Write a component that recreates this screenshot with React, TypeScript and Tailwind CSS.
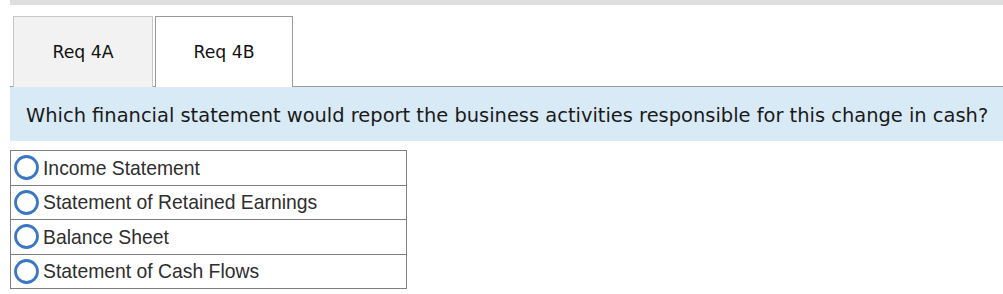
import React from "react";

const options = [
  "Income Statement",
  "Statement of Retained Earnings",
  "Balance Sheet",
  "Statement of Cash Flows",
];

function Radio() {
  return (
    <svg width="25" height="25" viewBox="0 0 25 25" className="shrink-0">
      <circle cx="12.5" cy="12.5" r="11" fill="white" stroke="#3a78c2" strokeWidth="2.8" />
    </svg>
  );
}

export default function App() {
  return (
    <div className="w-[1003px] h-[294px] bg-white overflow-hidden">
      <div className="ml-[10px] h-[5px] bg-[#dedede]" />
      <div className="ml-[10px] mt-[11px] flex items-end border-b border-[#9a9a9a] pl-[3px] h-[71px]">
        <div
          className="w-[140px] h-[71px] -mb-px bg-[#f2f2f2] border border-b-0 border-[#c8c8c8] flex items-center justify-center text-[17.3px] text-[#111] pt-[1px]"
          style={{ fontFamily: '"DejaVu Sans", Verdana, sans-serif' }}
        >
          Req 4A
        </div>
        <div
          className="ml-[2px] w-[138px] h-[71px] -mb-px bg-white border border-b-0 border-[#9a9a9a] flex items-center justify-center text-[17.3px] text-[#111] pt-[1px]"
          style={{ fontFamily: '"DejaVu Sans", Verdana, sans-serif' }}
        >
          Req 4B
        </div>
      </div>
      <div
        className="ml-[10px] h-[54px] bg-[#d9eaf7] flex items-center pl-[16px] pt-[3px] text-[19.45px] text-[#1a1a1a] whitespace-nowrap"
        style={{ fontFamily: '"DejaVu Sans", Verdana, sans-serif' }}
      >
        Which financial statement would report the business activities responsible for this change in cash?
      </div>
      <table
        className="ml-[10px] mt-[9px] w-[397px] border-collapse"
        style={{ fontFamily: '"Liberation Sans", Arial, sans-serif' }}
      >
        <tbody>
          {options.map((o) => (
            <tr key={o} className="h-[34.5px]">
              <td className="border border-[#7f7f7f] p-0 pl-[3px]">
                <div className="flex items-center gap-[4px] text-[19.35px] text-[#2e2e2e] leading-none">
                  <Radio />
                  <span className="pt-[1px]">{o}</span>
                </div>
              </td>
            </tr>
          ))}
        </tbody>
      </table>
    </div>
  );
}
